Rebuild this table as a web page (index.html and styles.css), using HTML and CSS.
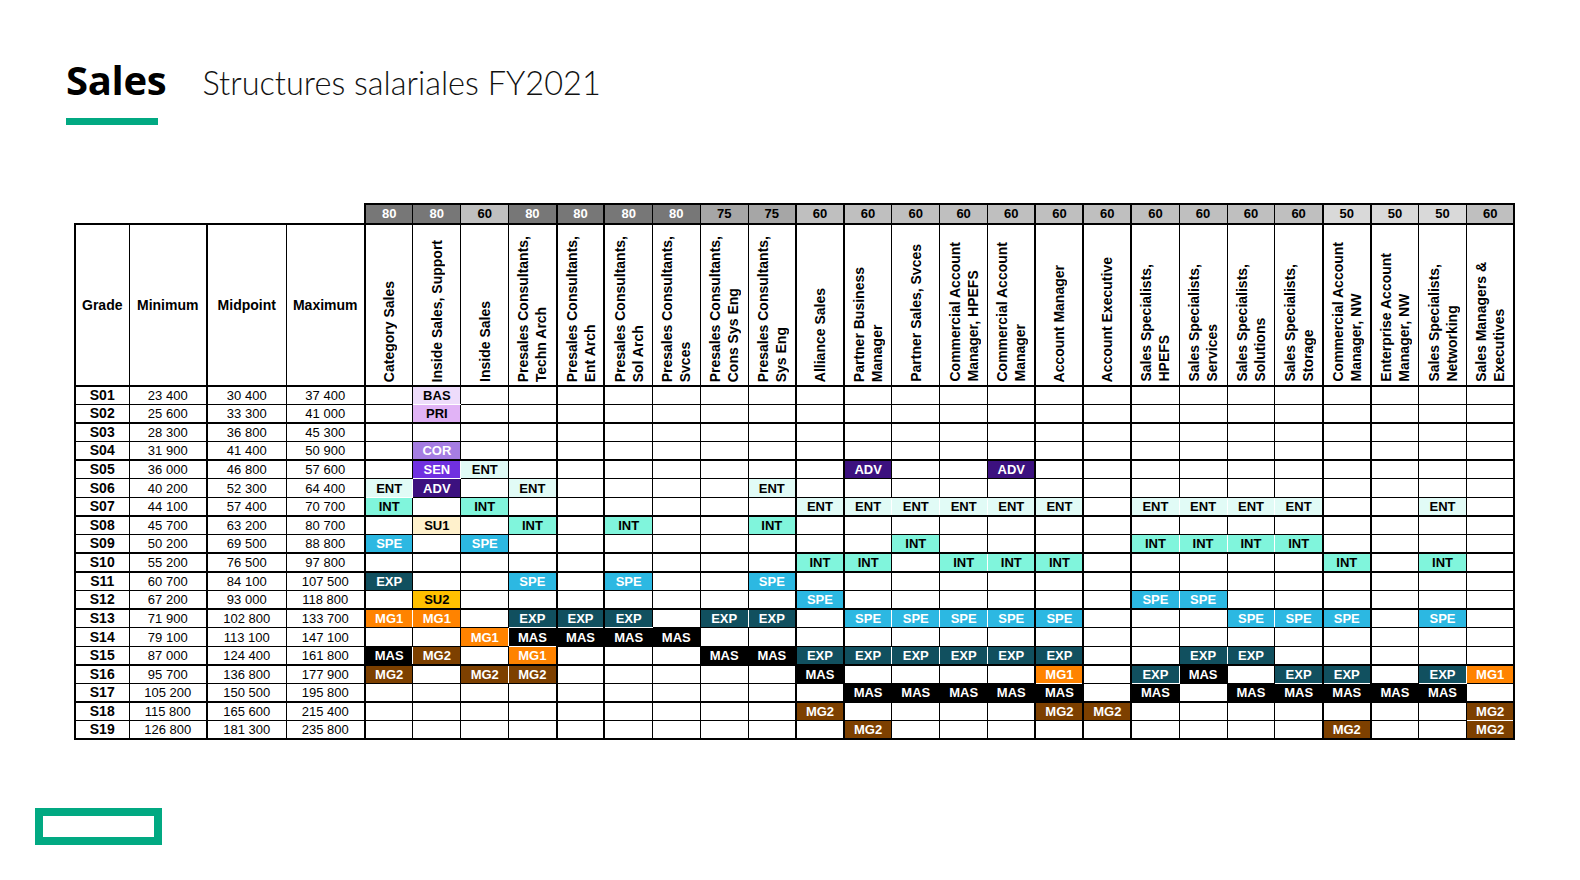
FILE: index.html
```html
<!DOCTYPE html>
<html lang="fr">
<head>
<meta charset="utf-8">
<title>Sales – Structures salariales FY2021</title>
<link rel="stylesheet" href="styles.css">
</head>
<body>
<div class="slide">
  <header class="head">
    <h1 class="title"><span class="t-main">Sales</span><span class="t-sub">Structures salariales FY2021</span></h1>
    <div class="accent"></div>
  </header>
  <main class="tablewrap">
    <table class="grid">
      <colgroup>
        <col class="cg"><col class="cmin"><col class="cmid"><col class="cmax">
        <col class="cj"><col class="cj"><col class="cj"><col class="cj"><col class="cj"><col class="cj"><col class="cj"><col class="cj">
        <col class="cj"><col class="cj"><col class="cj"><col class="cj"><col class="cj"><col class="cj"><col class="cj"><col class="cj">
        <col class="cj"><col class="cj"><col class="cj"><col class="cj"><col class="cj"><col class="cj"><col class="cj"><col class="cj">
      </colgroup>
      <thead>
        <tr class="nums">
          <td class="blank"></td><td class="blank"></td><td class="blank"></td><td class="blank"></td>
          <td class="n80">80</td><td class="n80">80</td><td class="n60">60</td><td class="n80">80</td><td class="n80">80</td><td class="n80">80</td><td class="n80">80</td><td class="n75">75</td><td class="n75">75</td>
          <td class="n60">60</td><td class="n60">60</td><td class="n60">60</td><td class="n60">60</td><td class="n60">60</td><td class="n60">60</td><td class="n60">60</td><td class="n60">60</td><td class="n60">60</td><td class="n60">60</td><td class="n60">60</td>
          <td class="n50">50</td><td class="n50">50</td><td class="n50">50</td><td class="n60">60</td>
        </tr>
        <tr class="hdr">
          <th>Grade</th><th>Minimum</th><th>Midpoint</th><th>Maximum</th>
          <th class="jh"><div class="rot">Category Sales</div></th>
          <th class="jh"><div class="rot">Inside Sales, Support</div></th>
          <th class="jh"><div class="rot">Inside Sales</div></th>
          <th class="jh"><div class="rot">Presales Consultants,<br>Techn Arch</div></th>
          <th class="jh"><div class="rot">Presales Consultants,<br>Ent Arch</div></th>
          <th class="jh"><div class="rot">Presales Consultants,<br>Sol Arch</div></th>
          <th class="jh"><div class="rot">Presales Consultants,<br>Svces</div></th>
          <th class="jh"><div class="rot">Presales Consultants,<br>Cons Sys Eng</div></th>
          <th class="jh"><div class="rot">Presales Consultants,<br>Sys Eng</div></th>
          <th class="jh"><div class="rot">Alliance Sales</div></th>
          <th class="jh"><div class="rot">Partner Business<br>Manager</div></th>
          <th class="jh"><div class="rot">Partner Sales, Svces</div></th>
          <th class="jh"><div class="rot">Commercial Account<br>Manager, HPEFS</div></th>
          <th class="jh"><div class="rot">Commercial Account<br>Manager</div></th>
          <th class="jh"><div class="rot">Account Manager</div></th>
          <th class="jh"><div class="rot">Account Executive</div></th>
          <th class="jh"><div class="rot">Sales Specialists,<br>HPEFS</div></th>
          <th class="jh"><div class="rot">Sales Specialists,<br>Services</div></th>
          <th class="jh"><div class="rot">Sales Specialists,<br>Solutions</div></th>
          <th class="jh"><div class="rot">Sales Specialists,<br>Storage</div></th>
          <th class="jh"><div class="rot">Commercial Account<br>Manager, NW</div></th>
          <th class="jh"><div class="rot">Enterprise Account<br>Manager, NW</div></th>
          <th class="jh"><div class="rot">Sales Specialists,<br>Networking</div></th>
          <th class="jh"><div class="rot">Sales Managers &amp;<br>Executives</div></th>
        </tr>
      </thead>
      <tbody>
        <tr>
          <td class="g">S01</td><td>23 400</td><td>30 400</td><td>37 400</td>
          <td></td><td class="c bas kb">BAS</td><td></td><td></td><td></td><td></td><td></td><td></td><td></td><td></td><td></td><td></td><td></td><td></td><td></td><td></td><td></td><td></td><td></td><td></td><td></td><td></td><td></td><td></td>
        </tr>
        <tr class="tb">
          <td class="g">S02</td><td>25 600</td><td>33 300</td><td>41 000</td>
          <td></td><td class="c pri">PRI</td><td></td><td></td><td></td><td></td><td></td><td></td><td></td><td></td><td></td><td></td><td></td><td></td><td></td><td></td><td></td><td></td><td></td><td></td><td></td><td></td><td></td><td></td>
        </tr>
        <tr>
          <td class="g">S03</td><td>28 300</td><td>36 800</td><td>45 300</td>
          <td></td><td></td><td></td><td></td><td></td><td></td><td></td><td></td><td></td><td></td><td></td><td></td><td></td><td></td><td></td><td></td><td></td><td></td><td></td><td></td><td></td><td></td><td></td><td></td>
        </tr>
        <tr class="tb">
          <td class="g">S04</td><td>31 900</td><td>41 400</td><td>50 900</td>
          <td></td><td class="c cor">COR</td><td></td><td></td><td></td><td></td><td></td><td></td><td></td><td></td><td></td><td></td><td></td><td></td><td></td><td></td><td></td><td></td><td></td><td></td><td></td><td></td><td></td><td></td>
        </tr>
        <tr>
          <td class="g">S05</td><td>36 000</td><td>46 800</td><td>57 600</td>
          <td></td><td class="c sen kb">SEN</td><td class="c ent">ENT</td><td></td><td></td><td></td><td></td><td></td><td></td><td></td><td class="c adv">ADV</td><td></td><td></td><td class="c adv">ADV</td><td></td><td></td><td></td><td></td><td></td><td></td><td></td><td></td><td></td><td></td>
        </tr>
        <tr>
          <td class="g">S06</td><td>40 200</td><td>52 300</td><td>64 400</td>
          <td class="c ent kb">ENT</td><td class="c adv">ADV</td><td></td><td class="c ent">ENT</td><td></td><td></td><td></td><td></td><td class="c ent">ENT</td><td></td><td></td><td></td><td></td><td></td><td></td><td></td><td></td><td></td><td></td><td></td><td></td><td></td><td></td><td></td>
        </tr>
        <tr class="tb">
          <td class="g">S07</td><td>44 100</td><td>57 400</td><td>70 700</td>
          <td class="c int">INT</td><td></td><td class="c int">INT</td><td></td><td></td><td></td><td></td><td></td><td></td><td class="c ent">ENT</td><td class="c ent">ENT</td><td class="c ent">ENT</td><td class="c ent">ENT</td><td class="c ent">ENT</td><td class="c ent">ENT</td><td></td><td class="c ent">ENT</td><td class="c ent">ENT</td><td class="c ent">ENT</td><td class="c ent">ENT</td><td></td><td></td><td class="c ent">ENT</td><td></td>
        </tr>
        <tr>
          <td class="g">S08</td><td>45 700</td><td>63 200</td><td>80 700</td>
          <td></td><td class="c su1">SU1</td><td></td><td class="c int">INT</td><td></td><td class="c int">INT</td><td></td><td></td><td class="c int">INT</td><td></td><td></td><td></td><td></td><td></td><td></td><td></td><td></td><td></td><td></td><td></td><td></td><td></td><td></td><td></td>
        </tr>
        <tr class="tb">
          <td class="g">S09</td><td>50 200</td><td>69 500</td><td>88 800</td>
          <td class="c spe">SPE</td><td></td><td class="c spe">SPE</td><td></td><td></td><td></td><td></td><td></td><td></td><td></td><td></td><td class="c int">INT</td><td></td><td></td><td></td><td></td><td class="c int">INT</td><td class="c int">INT</td><td class="c int">INT</td><td class="c int">INT</td><td></td><td></td><td></td><td></td>
        </tr>
        <tr class="tb">
          <td class="g">S10</td><td>55 200</td><td>76 500</td><td>97 800</td>
          <td></td><td></td><td></td><td></td><td></td><td></td><td></td><td></td><td></td><td class="c int">INT</td><td class="c int">INT</td><td></td><td class="c int">INT</td><td class="c int">INT</td><td class="c int">INT</td><td></td><td></td><td></td><td></td><td></td><td class="c int">INT</td><td></td><td class="c int">INT</td><td></td>
        </tr>
        <tr>
          <td class="g">S11</td><td>60 700</td><td>84 100</td><td>107 500</td>
          <td class="c exp">EXP</td><td></td><td></td><td class="c spe">SPE</td><td></td><td class="c spe">SPE</td><td></td><td></td><td class="c spe">SPE</td><td></td><td></td><td></td><td></td><td></td><td></td><td></td><td></td><td></td><td></td><td></td><td></td><td></td><td></td><td></td>
        </tr>
        <tr class="tb">
          <td class="g">S12</td><td>67 200</td><td>93 000</td><td>118 800</td>
          <td></td><td class="c su2">SU2</td><td></td><td></td><td></td><td></td><td></td><td></td><td></td><td class="c spe">SPE</td><td></td><td></td><td></td><td></td><td></td><td></td><td class="c spe">SPE</td><td class="c spe">SPE</td><td></td><td></td><td></td><td></td><td></td><td></td>
        </tr>
        <tr>
          <td class="g">S13</td><td>71 900</td><td>102 800</td><td>133 700</td>
          <td class="c mg1">MG1</td><td class="c mg1">MG1</td><td></td><td class="c exp kb">EXP</td><td class="c exp kb">EXP</td><td class="c exp kb">EXP</td><td></td><td class="c exp">EXP</td><td class="c exp">EXP</td><td></td><td class="c spe">SPE</td><td class="c spe">SPE</td><td class="c spe">SPE</td><td class="c spe">SPE</td><td class="c spe">SPE</td><td></td><td></td><td></td><td class="c spe">SPE</td><td class="c spe">SPE</td><td class="c spe">SPE</td><td></td><td class="c spe">SPE</td><td></td>
        </tr>
        <tr>
          <td class="g">S14</td><td>79 100</td><td>113 100</td><td>147 100</td>
          <td></td><td></td><td class="c mg1">MG1</td><td class="c mas kb">MAS</td><td class="c mas">MAS</td><td class="c mas">MAS</td><td class="c mas">MAS</td><td></td><td></td><td></td><td></td><td></td><td></td><td></td><td></td><td></td><td></td><td></td><td></td><td></td><td></td><td></td><td></td><td></td>
        </tr>
        <tr class="tb">
          <td class="g">S15</td><td>87 000</td><td>124 400</td><td>161 800</td>
          <td class="c mas">MAS</td><td class="c mg2">MG2</td><td></td><td class="c mg1">MG1</td><td></td><td></td><td></td><td class="c mas">MAS</td><td class="c mas">MAS</td><td class="c exp">EXP</td><td class="c exp">EXP</td><td class="c exp">EXP</td><td class="c exp">EXP</td><td class="c exp">EXP</td><td class="c exp">EXP</td><td></td><td></td><td class="c exp">EXP</td><td class="c exp">EXP</td><td></td><td></td><td></td><td></td><td></td>
        </tr>
        <tr>
          <td class="g">S16</td><td>95 700</td><td>136 800</td><td>177 900</td>
          <td class="c mg2">MG2</td><td></td><td class="c mg2">MG2</td><td class="c mg2">MG2</td><td></td><td></td><td></td><td></td><td></td><td class="c mas">MAS</td><td></td><td></td><td></td><td></td><td class="c mg1 kb">MG1</td><td></td><td class="c exp kb">EXP</td><td class="c mas">MAS</td><td></td><td class="c exp kb">EXP</td><td class="c exp kb">EXP</td><td></td><td class="c exp kb">EXP</td><td class="c mg1">MG1</td>
        </tr>
        <tr class="tb">
          <td class="g">S17</td><td>105 200</td><td>150 500</td><td>195 800</td>
          <td></td><td></td><td></td><td></td><td></td><td></td><td></td><td></td><td></td><td></td><td class="c mas">MAS</td><td class="c mas">MAS</td><td class="c mas">MAS</td><td class="c mas">MAS</td><td class="c mas">MAS</td><td></td><td class="c mas">MAS</td><td></td><td class="c mas">MAS</td><td class="c mas">MAS</td><td class="c mas">MAS</td><td class="c mas">MAS</td><td class="c mas">MAS</td><td></td>
        </tr>
        <tr>
          <td class="g">S18</td><td>115 800</td><td>165 600</td><td>215 400</td>
          <td></td><td></td><td></td><td></td><td></td><td></td><td></td><td></td><td></td><td class="c mg2">MG2</td><td></td><td></td><td></td><td></td><td class="c mg2">MG2</td><td class="c mg2">MG2</td><td></td><td></td><td></td><td></td><td></td><td></td><td></td><td class="c mg2 kb">MG2</td>
        </tr>
        <tr class="tb">
          <td class="g">S19</td><td>126 800</td><td>181 300</td><td>235 800</td>
          <td></td><td></td><td></td><td></td><td></td><td></td><td></td><td></td><td></td><td></td><td class="c mg2">MG2</td><td></td><td></td><td></td><td></td><td></td><td></td><td></td><td></td><td></td><td class="c mg2">MG2</td><td></td><td></td><td class="c mg2">MG2</td>
        </tr>
      </tbody>
    </table>
  </main>
  <footer class="foot">
    <div class="logo" aria-label="Hewlett Packard Enterprise"></div>
  </footer>
</div>
</body>
</html>
```

FILE: styles.css
```css
* { box-sizing: border-box; }
html, body { margin: 0; padding: 0; background: #fff; }
body { font-family: "Liberation Sans", Arial, sans-serif; color: #000; }

.slide {
  width: 1580px;
  height: 880px;
  display: flex;
  flex-direction: column;
  overflow: hidden;
}

/* ---------- title ---------- */
.head { padding: 61px 0 0 66px; }
.title {
  margin: 0;
  display: flex;
  align-items: baseline;
  gap: 36px;
  font-weight: normal;
  line-height: 38px;
}
.t-main {
  font-family: "Open Sans", "Noto Sans", sans-serif;
  font-weight: 700;
  font-size: 40px;
  letter-spacing: -0.3px;
  color: #000;
}
.t-sub {
  font-family: "Lato", "Open Sans", sans-serif;
  font-weight: 300;
  font-size: 32.5px;
  color: #111;
}
.accent {
  width: 92px;
  height: 7px;
  background: #01a982;
  margin-top: 16px;
}

/* ---------- table ---------- */
.tablewrap { padding-left: 74px; margin-top: 78px; }

.grid {
  border-collapse: collapse;
  table-layout: fixed;
  width: 1441px;
  font-family: "Liberation Sans", Arial, sans-serif;
}
.cg { width: 54px; }
.cmin { width: 78px; }
.cmid, .cmax { width: 79px; }
.cj { width: 47.9px; }

.grid td, .grid th {
  padding: 0;
  border: 0 none;
  border-right: 1px solid #000;
  border-bottom: 1px solid #000;
  text-align: center;
  vertical-align: middle;
  white-space: nowrap;
  overflow: hidden;
}

/* weight row */
.nums { height: 20px; }
.nums td {
  font-size: 13px;
  font-weight: bold;
  line-height: 16px;
  border-top: 2px solid #000;
  border-bottom: 2px solid #000;
}
.n80 { background: #777777; color: #fff; }
.n75 { background: #a6a6a6; }
.n60 { background: #bfbfbf; }
.n50 { background: #d9d9d9; }

/* header row */
.hdr { height: 162px; }
.hdr th {
  border-top: 2px solid #000;
  border-bottom: 2px solid #000;
  font-size: 14px;
  font-weight: bold;
  line-height: 16px;
}
.hdr th.jh {
  vertical-align: bottom;
  padding-bottom: 3px;
  line-height: 0;
  font-size: 0;
}
.rot {
  display: inline-block;
  vertical-align: top;
  writing-mode: vertical-rl;
  transform: rotate(180deg);
  font-size: 14px;
  line-height: 18px;
  text-align: left;
  white-space: nowrap;
}

/* body rows */
.grid tbody tr { height: 18.6px; }
.grid tbody td { font-size: 13px; line-height: 15px; }
.grid tbody td.g { font-size: 14px; font-weight: bold; }
.grid tbody tr.tb > td { border-bottom-width: 2px; }

/* thick column separators */
.grid tr > :first-child,
.grid tr > :nth-child(3),
.grid tr > :nth-child(5),
.grid tr > :nth-child(9),
.grid tr > :nth-child(10),
.grid tr > :nth-child(14),
.grid tr > :nth-child(15),
.grid tr > :nth-child(19),
.grid tr > :nth-child(20),
.grid tr > :nth-child(21),
.grid tr > :nth-child(25),
.grid tr > :nth-child(26) { border-left: 2px solid #000; }
.grid tr > :last-child { border-right: 2px solid #000; }
.grid .nums .blank { border: 0 none; }

/* level codes */
.grid tbody td.c { font-weight: bold; font-size: 13px; }
.grid td.c:has(+ td.c) { border-right-color: #fff; }
.grid td.mas:has(+ td.mas) { border-right-color: #000; }
.grid td.kb { border-bottom-color: #fff; }

.bas { background: #eedcfb; }
.pri { background: #e1b3f6; }
.cor { background: #a57de2; color: #fff; }
.sen { background: #7030e0; color: #fff; }
.adv { background: #3c117f; color: #fff; }
.ent { background: #e1fbf6; }
.int { background: #80f5dc; }
.spe { background: #2cb8e2; color: #fff; }
.exp { background: #11505f; color: #fff; }
.mas { background: #000; color: #fff; }
.su1 { background: #fff1cc; }
.su2 { background: #ffc000; }
.mg1 { background: #ff8300; color: #fff; }
.mg2 { background: #7d4000; color: #fff; }

/* ---------- footer logo ---------- */
.foot { margin-top: auto; padding: 0 0 35px 35px; }
.logo {
  width: 127px;
  height: 37px;
  border: 8px solid #01a982;
}
```
